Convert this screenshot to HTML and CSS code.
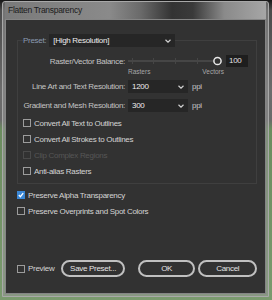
FILE: index.html
```html
<!DOCTYPE html>
<html lang="en">
<head>
    <meta charset="UTF-8">
    <title>Flatten Transparency</title>
    <link rel="stylesheet" href="styles.css">
</head>
<body>
    <div class="window">
        <div class="titlebar">Flatten Transparency</div>
        <div class="content">
            <fieldset class="group">
                <legend class="preset">
                    <span class="preset-row">
                        <span class="preset-label">Preset:</span>
                        <span class="select select-wide">[High Resolution]
                            <svg class="chevron" width="6" height="4" viewBox="0 0 6 4"><polyline points="0.5,0.8 3,3.2 5.5,0.8" fill="none" stroke="#d0d0d0" stroke-width="1.2"/></svg>
                        </span>
                    </span>
                </legend>

                <div class="row row-balance">
                    <span class="label">Raster/Vector Balance:</span>
                    <svg class="slider" width="94" height="12" viewBox="0 0 94 12">
                        <line x1="0" y1="6" x2="90" y2="6" stroke="#5a5a5a" stroke-width="1"/>
                        <line x1="4.5" y1="3" x2="4.5" y2="9" stroke="#464646"/>
                        <line x1="25.5" y1="3" x2="25.5" y2="9" stroke="#464646"/>
                        <line x1="47.5" y1="3" x2="47.5" y2="9" stroke="#464646"/>
                        <line x1="69.5" y1="3" x2="69.5" y2="9" stroke="#464646"/>
                        <circle cx="89.5" cy="6" r="3.6" fill="#323232" stroke="#e8e8e8" stroke-width="1.5"/>
                    </svg>
                    <span class="value">100</span>
                </div>
                <div class="row row-ends">
                    <span class="label"></span>
                    <span class="ends"><span>Rasters</span><span>Vectors</span></span>
                </div>
                <div class="row row-res">
                    <span class="label">Line Art and Text Resolution:</span>
                    <span class="select select-res">1200
                        <svg class="chevron" width="6" height="4" viewBox="0 0 6 4"><polyline points="0.5,0.8 3,3.2 5.5,0.8" fill="none" stroke="#d0d0d0" stroke-width="1.2"/></svg>
                    </span>
                    <span class="unit">ppi</span>
                </div>
                <div class="row row-res">
                    <span class="label">Gradient and Mesh Resolution:</span>
                    <span class="select select-res">300
                        <svg class="chevron" width="6" height="4" viewBox="0 0 6 4"><polyline points="0.5,0.8 3,3.2 5.5,0.8" fill="none" stroke="#d0d0d0" stroke-width="1.2"/></svg>
                    </span>
                    <span class="unit">ppi</span>
                </div>

                <div class="checks">
                    <label class="check"><span class="box"></span>Convert All Text to Outlines</label>
                    <label class="check"><span class="box"></span>Convert All Strokes to Outlines</label>
                    <label class="check disabled"><span class="box"></span>Clip Complex Regions</label>
                    <label class="check"><span class="box"></span>Anti-alias Rasters</label>
                </div>
            </fieldset>

            <div class="options">
                <label class="check"><span class="box checked"><svg width="6" height="6" viewBox="0 0 6 6"><polyline points="0.8,3 2.4,4.7 5.2,1.2" fill="none" stroke="#fff" stroke-width="1.3"/></svg></span>Preserve Alpha Transparency</label>
                <label class="check"><span class="box"></span>Preserve Overprints and Spot Colors</label>
            </div>

            <div class="footer">
                <label class="check"><span class="box"></span>Preview</label>
                <button class="btn btn-save">Save Preset...</button>
                <button class="btn btn-ok">OK</button>
                <button class="btn btn-cancel">Cancel</button>
            </div>
        </div>
    </div>
</body>
</html>
```

FILE: styles.css
```css
* {
    margin: 0;
    padding: 0;
    box-sizing: border-box;
}

body {
    height: 300px;
    padding: 1px 3px 3px 2px;
    font-family: 'Liberation Sans', Arial, sans-serif;
    font-size: 8px;
    letter-spacing: -0.3px;
    white-space: nowrap;
    color: #d2d2d2;
    overflow: hidden;
    background: linear-gradient(to bottom, #161616 0, #4a4a4a 10px, #6c6c6c 30%, #6a6a6a 40%, #6b8c5f 43%, #7a9a6e 100%);
}

.window {
    height: 100%;
    display: flex;
    flex-direction: column;
    border: 1px solid #a8a8a8;
    border-radius: 3px 3px 0 0;
    background: rgba(150, 150, 150, 0.55);
    padding: 0 2px 2px 2px;
}

.titlebar {
    height: 17px;
    line-height: 17px;
    padding-left: 3px;
    font-size: 8.5px;
    color: #1c1c1c;
    background: linear-gradient(90deg, #7a7a7a 0%, #8a8a8a 40%, #6a6a6a 52%, #333 64%, #3a3a3a 72%, #8a8a8a 84%, #a6a6a6 100%);
}

.content {
    flex: 1;
    display: flex;
    flex-direction: column;
    background: #323232;
    border: 1px solid #858585;
    padding: 0 8px 0 11px;
}

/* Preset group */
.group {
    margin-top: 14px;
    border: 1px solid #3f3f3f;
    padding: 0 0 4px 0;
    min-width: 0;
}

.preset {
    margin-left: 5px;
    padding: 0;
}

.preset-row {
    display: flex;
    align-items: center;
    gap: 3px;
}

.preset-label {
    color: #8a9ab0;
}

.select {
    display: flex;
    align-items: center;
    justify-content: space-between;
    height: 13px;
    padding: 0 4px 0 4px;
    background: #262626;
    color: #ececec;
}

.select-wide {
    width: 126px;
}

.select-res {
    width: 60px;
}

.row {
    display: flex;
    align-items: center;
}

.row .label {
    width: 110px;
    padding-right: 3px;
    text-align: right;
    color: #c4c4c4;
}

.row-balance {
    margin-top: 8px;
    height: 12px;
}

.value {
    width: 22px;
    height: 12px;
    line-height: 12px;
    margin-left: 4px;
    padding-left: 3px;
    background: #1e1e1e;
    color: #e2e2e2;
}

.row-ends {
    height: 8px;
}

.ends {
    width: 96px;
    display: flex;
    justify-content: space-between;
    font-size: 6.5px;
    letter-spacing: 0;
    color: #a8a8a8;
}

.row-res {
    height: 13px;
    margin-top: 6px;
}

.row-ends + .row-res {
    margin-top: 5px;
}

.unit {
    margin-left: 4px;
    color: #c4c4c4;
}

/* Checkboxes */
.checks {
    margin-top: 3px;
    padding-left: 5px;
}

.check {
    display: flex;
    align-items: center;
    gap: 3px;
    height: 16px;
    color: #d4d4d4;
}

.box {
    width: 8px;
    height: 8px;
    border: 1px solid #9c9c9c;
    display: flex;
    align-items: center;
    justify-content: center;
}

.box.checked {
    background: #3a86d4;
    border-color: #3a86d4;
}

.check.disabled {
    color: #565656;
}

.check.disabled .box {
    border-color: #4a4a4a;
}

.options {
    margin-top: 3px;
}

/* Footer buttons */
.footer {
    margin-top: auto;
    margin-bottom: 16px;
    display: flex;
    align-items: center;
    height: 17px;
}

.btn {
    height: 17px;
    border: 2px solid #c0c0c0;
    border-radius: 9px;
    background: transparent;
    color: #e4e4e4;
    font: inherit;
    letter-spacing: -0.3px;
}

.btn-save {
    width: 64px;
    margin-left: 7px;
}

.btn-ok {
    width: 58px;
    margin-left: 13px;
}

.btn-cancel {
    width: 59px;
    margin-left: 3px;
}
```
